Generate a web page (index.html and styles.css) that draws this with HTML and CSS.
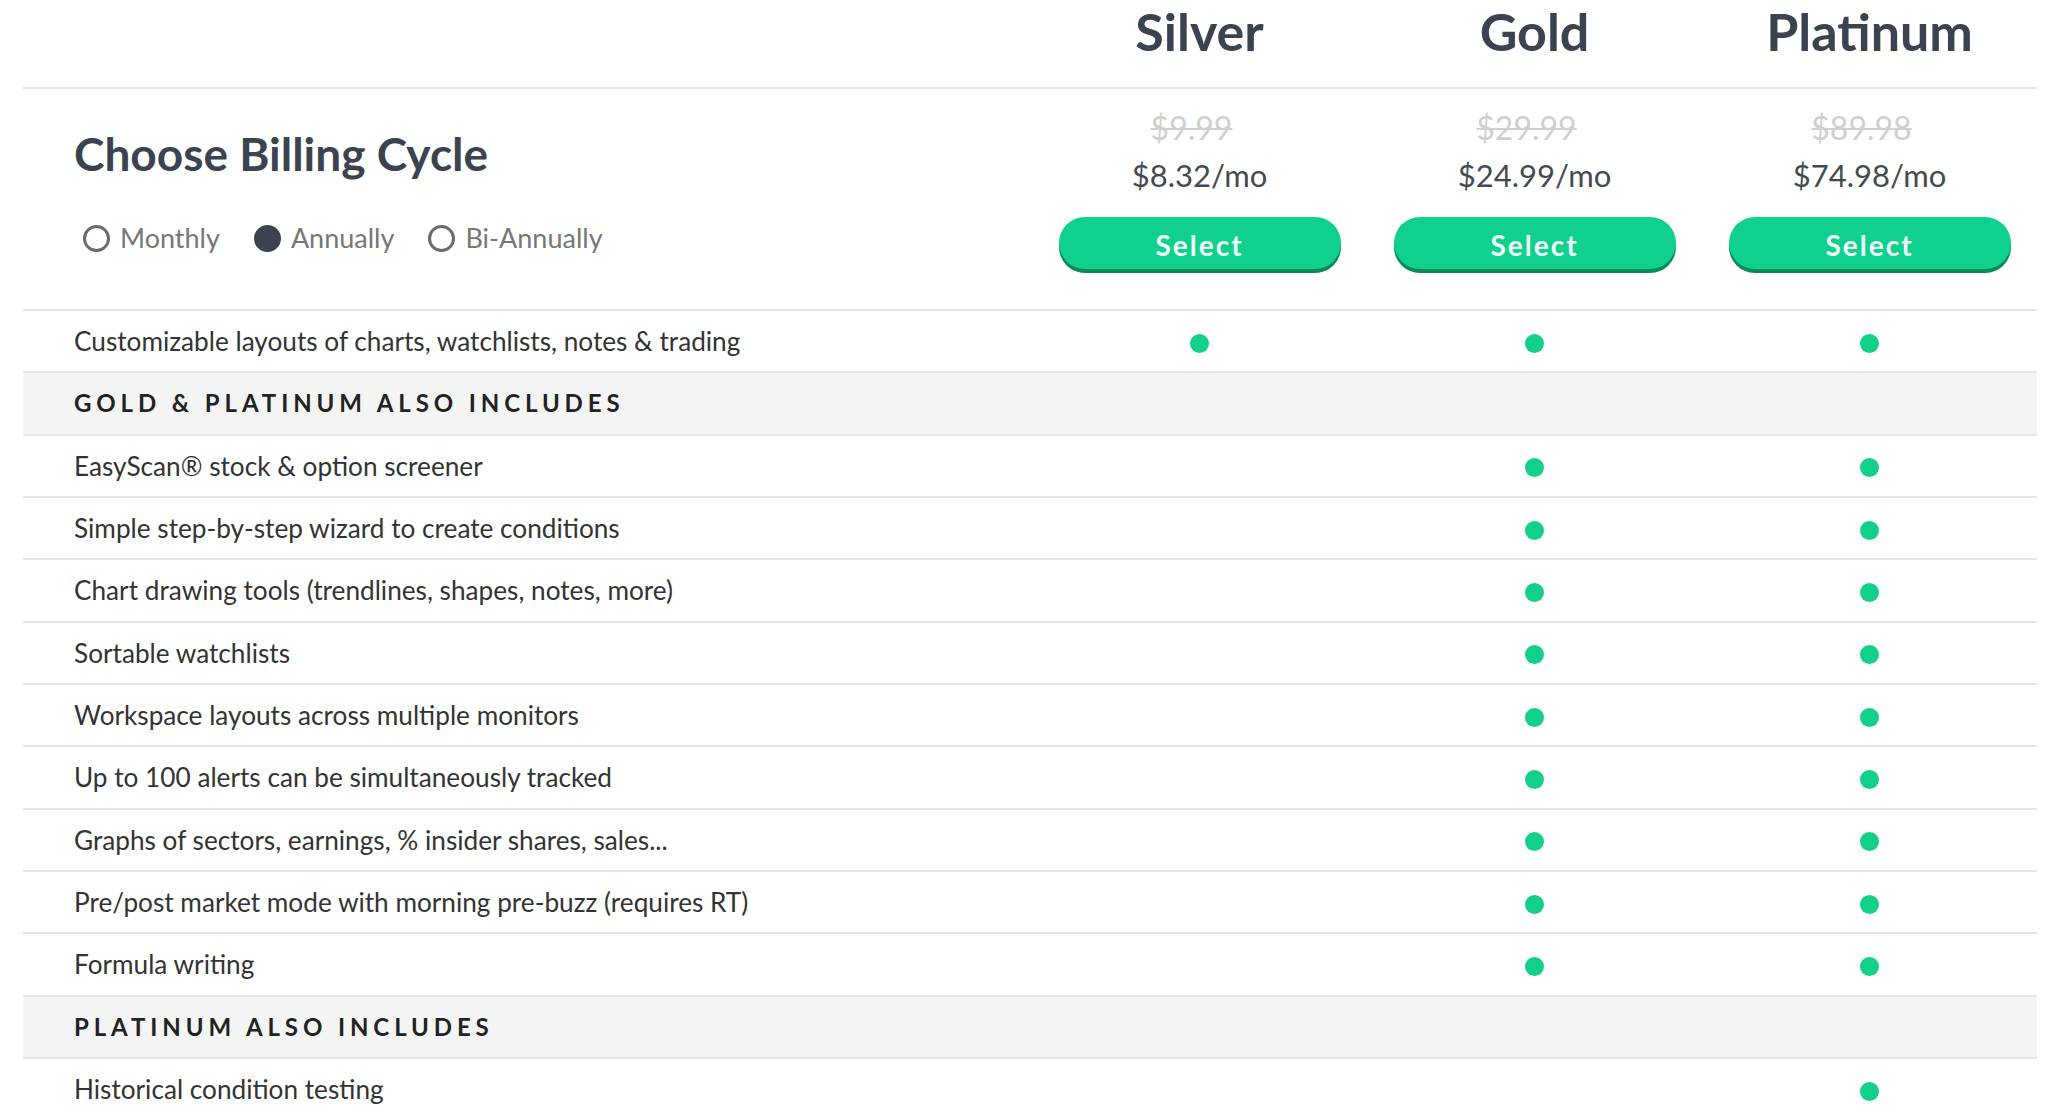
FILE: index.html
```html
<!DOCTYPE html>
<html lang="en">
<head>
<meta charset="utf-8">
<title>Pricing</title>
<link rel="stylesheet" href="styles.css">
</head>
<body>
<div class="table">
  <div class="row head">
    <div class="feat"></div>
    <div class="plan-name">Silver</div>
    <div class="plan-name">Gold</div>
    <div class="plan-name">Platinum</div>
  </div>

  <div class="row pricing">
    <div class="feat billing">
      <h1 class="billing-title">Choose Billing Cycle</h1>
      <div class="radios">
        <label class="radio"><span class="radio-dot"></span><span class="radio-label">Monthly</span></label>
        <label class="radio checked"><span class="radio-dot"></span><span class="radio-label">Annually</span></label>
        <label class="radio"><span class="radio-dot"></span><span class="radio-label">Bi-Annually</span></label>
      </div>
    </div>
    <div class="price-cell">
      <div class="old-price">$9.99</div>
      <div class="price">$8.32/mo</div>
      <button class="select-btn">Select</button>
    </div>
    <div class="price-cell">
      <div class="old-price">$29.99</div>
      <div class="price">$24.99/mo</div>
      <button class="select-btn">Select</button>
    </div>
    <div class="price-cell">
      <div class="old-price">$89.98</div>
      <div class="price">$74.98/mo</div>
      <button class="select-btn">Select</button>
    </div>
  </div>

  <div class="row feature first">
    <div class="feat">Customizable layouts of charts, watchlists, notes &amp; trading</div>
    <div class="cell"><span class="dot"></span></div>
    <div class="cell"><span class="dot"></span></div>
    <div class="cell"><span class="dot"></span></div>
  </div>

  <div class="row section">
    <div class="feat">GOLD &amp; PLATINUM ALSO INCLUDES</div>
  </div>

  <div class="row feature">
    <div class="feat">EasyScan® stock &amp; option screener</div>
    <div class="cell"></div>
    <div class="cell"><span class="dot"></span></div>
    <div class="cell"><span class="dot"></span></div>
  </div>
  <div class="row feature">
    <div class="feat">Simple step-by-step wizard to create conditions</div>
    <div class="cell"></div>
    <div class="cell"><span class="dot"></span></div>
    <div class="cell"><span class="dot"></span></div>
  </div>
  <div class="row feature">
    <div class="feat">Chart drawing tools (trendlines, shapes, notes, more)</div>
    <div class="cell"></div>
    <div class="cell"><span class="dot"></span></div>
    <div class="cell"><span class="dot"></span></div>
  </div>
  <div class="row feature">
    <div class="feat">Sortable watchlists</div>
    <div class="cell"></div>
    <div class="cell"><span class="dot"></span></div>
    <div class="cell"><span class="dot"></span></div>
  </div>
  <div class="row feature">
    <div class="feat">Workspace layouts across multiple monitors</div>
    <div class="cell"></div>
    <div class="cell"><span class="dot"></span></div>
    <div class="cell"><span class="dot"></span></div>
  </div>
  <div class="row feature">
    <div class="feat">Up to 100 alerts can be simultaneously tracked</div>
    <div class="cell"></div>
    <div class="cell"><span class="dot"></span></div>
    <div class="cell"><span class="dot"></span></div>
  </div>
  <div class="row feature">
    <div class="feat">Graphs of sectors, earnings, % insider shares, sales...</div>
    <div class="cell"></div>
    <div class="cell"><span class="dot"></span></div>
    <div class="cell"><span class="dot"></span></div>
  </div>
  <div class="row feature">
    <div class="feat">Pre/post market mode with morning pre-buzz (requires RT)</div>
    <div class="cell"></div>
    <div class="cell"><span class="dot"></span></div>
    <div class="cell"><span class="dot"></span></div>
  </div>
  <div class="row feature">
    <div class="feat">Formula writing</div>
    <div class="cell"></div>
    <div class="cell"><span class="dot"></span></div>
    <div class="cell"><span class="dot"></span></div>
  </div>

  <div class="row section">
    <div class="feat">PLATINUM ALSO INCLUDES</div>
  </div>

  <div class="row feature">
    <div class="feat">Historical condition testing</div>
    <div class="cell"></div>
    <div class="cell"></div>
    <div class="cell"><span class="dot"></span></div>
  </div>
</div>
</body>
</html>
```

FILE: styles.css
```css
* { box-sizing: border-box; }

html, body {
  margin: 0;
  padding: 0;
  background: #ffffff;
  font-family: Lato, "Open Sans", "Liberation Sans", sans-serif;
  color: #333333;
  overflow: hidden;
}

.table {
  margin-left: 23px;
  width: 2014px;
}

.row {
  display: grid;
  grid-template-columns: 1009px repeat(3, 335px);
  align-items: center;
}

/* header with plan names */
.head {
  height: 89px;
  border-bottom: 2px solid #e4e4e4;
  align-items: start;
}
.plan-name {
  text-align: center;
  font-size: 52px;
  font-weight: 700;
  color: #3b4351;
  line-height: 62px;
}

/* pricing / billing row */
.pricing {
  height: 220px;
  align-items: start;
}
.billing {
  padding-left: 51px;
}
.billing-title {
  margin: 0;
  padding-top: 36px;
  font-size: 46px;
  font-weight: 700;
  line-height: 58px;
  color: #3b4351;
}
.radios {
  display: flex;
  align-items: center;
  margin-top: 38px;
  padding-left: 9px;
  gap: 34px;
}
.radio {
  display: flex;
  align-items: center;
  gap: 10px;
}
.radio-dot {
  width: 27px;
  height: 27px;
  border-radius: 50%;
  border: 3px solid #6b6b6b;
}
.radio.checked .radio-dot {
  background: #3b4351;
  border-color: #3b4351;
}
.radio-label {
  font-size: 27px;
  color: #777777;
  line-height: 34px;
}

.price-cell {
  display: flex;
  flex-direction: column;
  align-items: center;
  padding-top: 20px;
}
.old-price {
  font-size: 32px;
  line-height: 38px;
  margin-right: 16px;
  color: #cfcfcf;
  text-decoration: line-through;
  text-decoration-thickness: 2px;
}
.price {
  font-size: 31px;
  line-height: 38px;
  margin-top: 9px;
  color: #444a52;
}
.select-btn {
  margin-top: 23px;
  width: 282px;
  height: 52px;
  border: 0;
  border-radius: 26px;
  background: #0fd08c;
  box-shadow: 0 4px 0 #0a8a57;
  color: #eefff7;
  font-family: Lato, "Open Sans", "Liberation Sans", sans-serif;
  font-size: 28px;
  font-weight: 700;
  letter-spacing: 2px;
  padding: 3px 0 0;
  cursor: pointer;
}

/* feature rows */
.feature, .section {
  height: 62.33px;
  border-top: 2px solid #e4e4e4;
}
.feature .feat {
  padding-left: 51px;
  font-size: 26.2px;
  color: #333333;
  line-height: 30px;
}
.feature.first .feat {
  padding-bottom: 0;
}
.cell {
  display: flex;
  justify-content: center;
  align-items: center;
  padding-top: 4px;
}
.dot {
  width: 19px;
  height: 19px;
  border-radius: 50%;
  background: #12cf8a;
}
.section {
  background: #f4f4f4;
}
.section .feat {
  padding-left: 51px;
  font-size: 24px;
  font-weight: 700;
  letter-spacing: 4.9px;
  color: #222222;
  line-height: 30px;
}
```
